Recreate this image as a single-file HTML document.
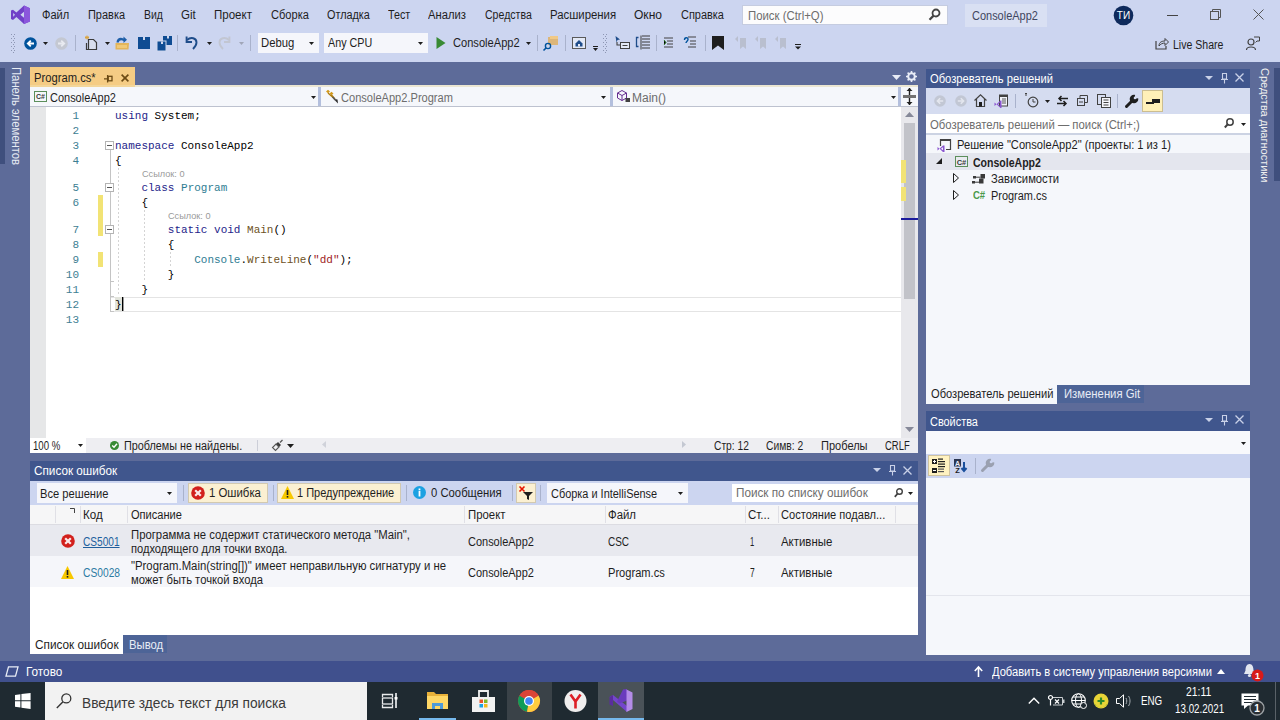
<!DOCTYPE html>
<html><head><meta charset="utf-8">
<style>
*{margin:0;padding:0;box-sizing:border-box}
html,body{width:1280px;height:720px;overflow:hidden;background:#5d6b99;font-family:"Liberation Sans",sans-serif;font-size:11px;color:#1e1e1e;position:relative}
.a{position:absolute}
.t{position:absolute;white-space:pre}
svg{position:absolute;overflow:visible}
</style></head><body>
<div class="a" style="left:0px;top:0px;width:1280px;height:62px;background:#ccd5f0;"></div>
<svg style="left:0px;top:0px;" width="40" height="30" viewBox="0 0 40 30"><path d="M24 5.6 L30 8.2 V21.4 L24 24 L16.4 17 L13 19.9 L11 19 V10.6 L13 9.7 L16.4 12.6 Z M13.2 12.9 V16.7 L15 14.8 Z M24 11.8 L20.4 14.8 L24 17.8 Z" fill="#7040c8" fill-rule="evenodd"/><path d="M24 5.6 L30 8.2 V21.4 L24 24 Z" fill="#8b57dc"/></svg>
<div class="t" style="left:42px;top:9px;font-size:12px;line-height:12px;color:#1e1e1e;font-family:'Liberation Sans',sans-serif;transform:scaleX(0.9223);transform-origin:0 0;">Файл</div>
<div class="t" style="left:88px;top:9px;font-size:12px;line-height:12px;color:#1e1e1e;font-family:'Liberation Sans',sans-serif;transform:scaleX(0.9128);transform-origin:0 0;">Правка</div>
<div class="t" style="left:144px;top:9px;font-size:12px;line-height:12px;color:#1e1e1e;font-family:'Liberation Sans',sans-serif;transform:scaleX(0.8688);transform-origin:0 0;">Вид</div>
<div class="t" style="left:181px;top:9px;font-size:12px;line-height:12px;color:#1e1e1e;font-family:'Liberation Sans',sans-serif;transform:scaleX(0.9621);transform-origin:0 0;">Git</div>
<div class="t" style="left:214px;top:9px;font-size:12px;line-height:12px;color:#1e1e1e;font-family:'Liberation Sans',sans-serif;transform:scaleX(0.9603);transform-origin:0 0;">Проект</div>
<div class="t" style="left:271px;top:9px;font-size:12px;line-height:12px;color:#1e1e1e;font-family:'Liberation Sans',sans-serif;transform:scaleX(0.9232);transform-origin:0 0;">Сборка</div>
<div class="t" style="left:327px;top:9px;font-size:12px;line-height:12px;color:#1e1e1e;font-family:'Liberation Sans',sans-serif;transform:scaleX(0.9044);transform-origin:0 0;">Отладка</div>
<div class="t" style="left:388px;top:9px;font-size:12px;line-height:12px;color:#1e1e1e;font-family:'Liberation Sans',sans-serif;transform:scaleX(0.8981);transform-origin:0 0;">Тест</div>
<div class="t" style="left:428px;top:9px;font-size:12px;line-height:12px;color:#1e1e1e;font-family:'Liberation Sans',sans-serif;transform:scaleX(0.9363);transform-origin:0 0;">Анализ</div>
<div class="t" style="left:485px;top:9px;font-size:12px;line-height:12px;color:#1e1e1e;font-family:'Liberation Sans',sans-serif;transform:scaleX(0.8798);transform-origin:0 0;">Средства</div>
<div class="t" style="left:550px;top:9px;font-size:12px;line-height:12px;color:#1e1e1e;font-family:'Liberation Sans',sans-serif;transform:scaleX(0.9477);transform-origin:0 0;">Расширения</div>
<div class="t" style="left:634px;top:9px;font-size:12px;line-height:12px;color:#1e1e1e;font-family:'Liberation Sans',sans-serif;transform:scaleX(1.0041);transform-origin:0 0;">Окно</div>
<div class="t" style="left:681px;top:9px;font-size:12px;line-height:12px;color:#1e1e1e;font-family:'Liberation Sans',sans-serif;transform:scaleX(0.9115);transform-origin:0 0;">Справка</div>
<div class="a" style="left:742px;top:5px;width:206px;height:20px;background:#fcfcfd;border:1px solid #c5cce0"></div>
<div class="t" style="left:748px;top:10px;font-size:12px;line-height:12px;color:#6d6d6d;font-family:'Liberation Sans',sans-serif;transform:scaleX(0.9479);transform-origin:0 0;">Поиск (Ctrl+Q)</div>
<svg style="left:928px;top:8px;" width="13" height="13" viewBox="0 0 13 13"><circle cx="8" cy="5" r="3.5" fill="none" stroke="#444" stroke-width="1.8"/><path d="M5.6 7.6 L1.5 11.7" stroke="#444" stroke-width="2.2"/></svg>
<div class="a" style="left:965px;top:4px;width:82px;height:23px;background:#d9e0f3;"></div>
<div class="t" style="left:972px;top:10px;font-size:12px;line-height:12px;color:#3f4660;font-family:'Liberation Sans',sans-serif;transform:scaleX(0.9147);transform-origin:0 0;">ConsoleApp2</div>
<svg style="left:1113px;top:5px;" width="21" height="21" viewBox="0 0 21 21"><circle cx="10.5" cy="10.5" r="9.8" fill="#0e2a5c"/><text x="10.5" y="14.3" font-size="10" fill="#fff" text-anchor="middle" font-family="Liberation Sans">ТИ</text></svg>
<div class="a" style="left:1167px;top:15px;width:11px;height:1px;background:#444;"></div>
<svg style="left:1210px;top:9px;" width="11" height="11" viewBox="0 0 11 11"><rect x="0.5" y="2.5" width="8" height="8" fill="none" stroke="#555"/><path d="M2.5 2.5 V0.5 H10.5 V8.5 H8.5" fill="none" stroke="#555"/></svg>
<svg style="left:1253px;top:9px;" width="11" height="11" viewBox="0 0 11 11"><path d="M0.5 0.5 L10.5 10.5 M10.5 0.5 L0.5 10.5" stroke="#555" stroke-width="1"/></svg>
<div class="a" style="left:11px;top:34px;width:1px;height:1px;background:#8d96b3;"></div>
<div class="a" style="left:14px;top:34px;width:1px;height:1px;background:#8d96b3;"></div>
<div class="a" style="left:12.5px;top:36px;width:1px;height:1px;background:#8d96b3;"></div>
<div class="a" style="left:11px;top:38px;width:1px;height:1px;background:#8d96b3;"></div>
<div class="a" style="left:14px;top:38px;width:1px;height:1px;background:#8d96b3;"></div>
<div class="a" style="left:12.5px;top:40px;width:1px;height:1px;background:#8d96b3;"></div>
<div class="a" style="left:11px;top:42px;width:1px;height:1px;background:#8d96b3;"></div>
<div class="a" style="left:14px;top:42px;width:1px;height:1px;background:#8d96b3;"></div>
<div class="a" style="left:12.5px;top:44px;width:1px;height:1px;background:#8d96b3;"></div>
<div class="a" style="left:11px;top:46px;width:1px;height:1px;background:#8d96b3;"></div>
<div class="a" style="left:14px;top:46px;width:1px;height:1px;background:#8d96b3;"></div>
<div class="a" style="left:12.5px;top:48px;width:1px;height:1px;background:#8d96b3;"></div>
<div class="a" style="left:11px;top:50px;width:1px;height:1px;background:#8d96b3;"></div>
<div class="a" style="left:14px;top:50px;width:1px;height:1px;background:#8d96b3;"></div>
<div class="a" style="left:12.5px;top:52px;width:1px;height:1px;background:#8d96b3;"></div>
<svg style="left:24px;top:37px;" width="13" height="13" viewBox="0 0 13 13"><circle cx="6.5" cy="6.5" r="6.3" fill="#00539c"/><path d="M10 6.5 H4 M6.8 3.6 L3.8 6.5 L6.8 9.4" stroke="#fff" stroke-width="1.8" fill="none"/></svg>
<svg style="left:43px;top:42px;" width="5" height="3" viewBox="0 0 5 3"><path d="M0 0 H5 L2.5 3 Z" fill="#1e1e1e"/></svg>
<svg style="left:55px;top:37px;" width="13" height="13" viewBox="0 0 13 13"><circle cx="6.5" cy="6.5" r="6.3" fill="#c4c8d2"/><path d="M3 6.5 H9 M6.2 3.6 L9.2 6.5 L6.2 9.4" stroke="#e8eaf0" stroke-width="1.8" fill="none"/></svg>
<div class="a" style="left:75px;top:35px;width:1px;height:16px;background:#a9b2cc;"></div>
<svg style="left:84px;top:35px;" width="14" height="16" viewBox="0 0 14 16"><path d="M3 0.5 V4.5 M1 2.5 H5 M1.5 1 L4.5 4 M4.5 1 L1.5 4" stroke="#d9a441" stroke-width="1"/><path d="M4.5 4.5 H9.5 L12.5 7.5 V14.5 H4.5 Z" fill="#d8deee" stroke="#3a3a3a" stroke-width="1.2"/><path d="M2.5 8 V14.5 H4" fill="none" stroke="#3a3a3a" stroke-width="1.2"/></svg>
<svg style="left:105px;top:42px;" width="5" height="3" viewBox="0 0 5 3"><path d="M0 0 H5 L2.5 3 Z" fill="#1e1e1e"/></svg>
<svg style="left:115px;top:36px;" width="15" height="14" viewBox="0 0 15 14"><path d="M1.5 6.5 C1.5 2.5 5 0.5 8.5 2.5 V0.5 L12 3.8 L8.5 7 V5 C6.5 3.8 4.2 4.2 3.8 6.5 Z" fill="#1f5fa8"/><path d="M0.5 7 H14 L13.5 13.5 H0.5 Z" fill="#e3b55b"/><rect x="2" y="9" width="10" height="3" fill="#f0c977"/></svg>
<svg style="left:138px;top:37px;" width="12" height="12" viewBox="0 0 12 12"><rect x="0" y="0" width="12" height="12" fill="#0f4c93"/><rect x="5" y="0" width="2" height="3" fill="#cfd8ee"/></svg>
<svg style="left:157px;top:36px;" width="15" height="15" viewBox="0 0 15 15"><rect x="6" y="0" width="9" height="9" fill="#0f4c93"/><rect x="10" y="0" width="2" height="2.5" fill="#cfd8ee"/><rect x="0" y="5" width="9" height="10" fill="#0f4c93" stroke="#cfd8ee" stroke-width="1"/><rect x="4" y="5.5" width="2" height="2.5" fill="#cfd8ee"/></svg>
<div class="a" style="left:177px;top:35px;width:1px;height:16px;background:#a9b2cc;"></div>
<svg style="left:184px;top:35px;" width="14" height="15" viewBox="0 0 14 15"><path d="M3 5 C7 1.5 12.5 3 12.5 7.5 C12.5 10 11 12 9 14" fill="none" stroke="#1f4d8a" stroke-width="1.9"/><path d="M2.6 1.5 V7 H8" fill="none" stroke="#1f4d8a" stroke-width="1.9"/></svg>
<svg style="left:207px;top:42px;" width="5" height="3" viewBox="0 0 5 3"><path d="M0 0 H5 L2.5 3 Z" fill="#1e1e1e"/></svg>
<svg style="left:218px;top:35px;" width="14" height="15" viewBox="0 0 14 15"><path d="M11 5 C7 1.5 1.5 3 1.5 7.5 C1.5 10 3 12 5 14" fill="none" stroke="#c2c6d2" stroke-width="1.9"/><path d="M11.4 1.5 V7 H6" fill="none" stroke="#c2c6d2" stroke-width="1.9"/></svg>
<svg style="left:239px;top:42px;" width="5" height="3" viewBox="0 0 5 3"><path d="M0 0 H5 L2.5 3 Z" fill="#a0a6b8"/></svg>
<div class="a" style="left:250px;top:35px;width:1px;height:16px;background:#a9b2cc;"></div>
<div class="a" style="left:258px;top:33px;width:61px;height:20px;background:#f5f6fb;"></div>
<div class="t" style="left:261px;top:37px;font-size:12px;line-height:12px;color:#1e1e1e;font-family:'Liberation Sans',sans-serif;transform:scaleX(0.9425);transform-origin:0 0;">Debug</div>
<svg style="left:309px;top:42px;" width="5" height="3" viewBox="0 0 5 3"><path d="M0 0 H5 L2.5 3 Z" fill="#1e1e1e"/></svg>
<div class="a" style="left:324px;top:33px;width:104px;height:20px;background:#f5f6fb;"></div>
<div class="t" style="left:328px;top:37px;font-size:12px;line-height:12px;color:#1e1e1e;font-family:'Liberation Sans',sans-serif;transform:scaleX(0.8943);transform-origin:0 0;">Any CPU</div>
<svg style="left:418px;top:42px;" width="5" height="3" viewBox="0 0 5 3"><path d="M0 0 H5 L2.5 3 Z" fill="#1e1e1e"/></svg>
<svg style="left:436px;top:37px;" width="10" height="12" viewBox="0 0 10 12"><path d="M0.5 0 L9.5 6 L0.5 12 Z" fill="#388a34"/></svg>
<div class="t" style="left:453px;top:37px;font-size:12px;line-height:12px;color:#1e1e1e;font-family:'Liberation Sans',sans-serif;transform:scaleX(0.9252);transform-origin:0 0;">ConsoleApp2</div>
<svg style="left:526px;top:42px;" width="5" height="3" viewBox="0 0 5 3"><path d="M0 0 H5 L2.5 3 Z" fill="#1e1e1e"/></svg>
<div class="a" style="left:537px;top:35px;width:1px;height:16px;background:#a9b2cc;"></div>
<svg style="left:543px;top:36px;" width="16" height="15" viewBox="0 0 16 15"><rect x="5" y="1" width="10" height="8" fill="#dcb67a"/><rect x="7" y="0" width="8" height="3" fill="#f0c987"/><circle cx="5" cy="10" r="2.6" fill="none" stroke="#00539c" stroke-width="1.4"/><path d="M3 12 L0.5 14.5" stroke="#00539c" stroke-width="1.6"/></svg>
<div class="a" style="left:565px;top:35px;width:1px;height:16px;background:#a9b2cc;"></div>
<svg style="left:572px;top:37px;" width="14" height="12" viewBox="0 0 14 12"><rect x="0.5" y="0.5" width="13" height="11" fill="#e3e9f6" stroke="#5a5a5a"/><path d="M3.5 6.5 L7 3 L10.5 6.5 V9.5 H3.5 Z" fill="#1f4d8a"/><rect x="6" y="7" width="2" height="2.5" fill="#e3e9f6"/></svg>
<svg style="left:593px;top:46px;" width="5" height="5" viewBox="0 0 5 5"><rect x="0" y="0" width="5" height="1" fill="#1e1e1e"/><path d="M0 2 H5 L2.5 5 Z" fill="#1e1e1e"/></svg>
<div class="a" style="left:603px;top:34px;width:1px;height:1px;background:#8d96b3;"></div>
<div class="a" style="left:606px;top:34px;width:1px;height:1px;background:#8d96b3;"></div>
<div class="a" style="left:604.5px;top:36px;width:1px;height:1px;background:#8d96b3;"></div>
<div class="a" style="left:603px;top:38px;width:1px;height:1px;background:#8d96b3;"></div>
<div class="a" style="left:606px;top:38px;width:1px;height:1px;background:#8d96b3;"></div>
<div class="a" style="left:604.5px;top:40px;width:1px;height:1px;background:#8d96b3;"></div>
<div class="a" style="left:603px;top:42px;width:1px;height:1px;background:#8d96b3;"></div>
<div class="a" style="left:606px;top:42px;width:1px;height:1px;background:#8d96b3;"></div>
<div class="a" style="left:604.5px;top:44px;width:1px;height:1px;background:#8d96b3;"></div>
<div class="a" style="left:603px;top:46px;width:1px;height:1px;background:#8d96b3;"></div>
<div class="a" style="left:606px;top:46px;width:1px;height:1px;background:#8d96b3;"></div>
<div class="a" style="left:604.5px;top:48px;width:1px;height:1px;background:#8d96b3;"></div>
<div class="a" style="left:603px;top:50px;width:1px;height:1px;background:#8d96b3;"></div>
<div class="a" style="left:606px;top:50px;width:1px;height:1px;background:#8d96b3;"></div>
<div class="a" style="left:604.5px;top:52px;width:1px;height:1px;background:#8d96b3;"></div>
<svg style="left:615px;top:36px;" width="15" height="14" viewBox="0 0 15 14"><path d="M0.5 0 L5 3.5 L2.5 4 L1.5 6.5 Z" fill="#1f4d8a"/><path d="M2 6 V9 H5" fill="none" stroke="#424242" stroke-width="1.1"/><rect x="5.5" y="6.5" width="9" height="6" fill="#e3e9f6" stroke="#424242"/><path d="M7.5 9.5 H12.5" stroke="#424242"/></svg>
<svg style="left:635px;top:35px;" width="16" height="15" viewBox="0 0 16 15"><path d="M3.5 2.5 H1.5 V11.5 H3.5" fill="none" stroke="#1f4d8a" stroke-width="1.3"/><path d="M7 1 H15 M7 4 H15 M7 7 H15 M7 10 H15 M7 13 H15" stroke="#3a3a3a" stroke-width="1.1"/><path d="M6 0.5 V14.5" stroke="#3a3a3a"/></svg>
<div class="a" style="left:656px;top:35px;width:1px;height:16px;background:#a9b2cc;"></div>
<svg style="left:664px;top:37px;" width="10" height="11" viewBox="0 0 10 11"><path d="M0 1 H9 M3 4 H9 M3 7 H9 M0 10 H9" stroke="#424242" stroke-width="1.2"/><path d="M0 3 L2 5.5 L0 8" stroke="#388a34" stroke-width="1"/></svg>
<svg style="left:684px;top:36px;" width="13" height="13" viewBox="0 0 13 13"><path d="M4 1 H12 M6 5 H12 M6 8 H12 M4 11 H12" stroke="#424242" stroke-width="1.2"/><path d="M0.5 4 C0.5 1 4 1 4 3.5 C4 5 2 5.5 2 7" fill="none" stroke="#00539c" stroke-width="1.4"/></svg>
<div class="a" style="left:705px;top:35px;width:1px;height:16px;background:#a9b2cc;"></div>
<svg style="left:712px;top:36px;" width="12" height="14" viewBox="0 0 12 14"><path d="M0 0 H12 V14 L6 9.5 L0 14 Z" fill="#1e1e1e"/></svg>
<svg style="left:735px;top:36px;" width="11" height="13" viewBox="0 0 11 13"><path d="M5 2 H11 V13 L8 10.5 L5 13 Z" fill="#b9bfcf"/><path d="M0 3 L3 0 L3 6 Z" fill="#b9bfcf"/></svg>
<svg style="left:755px;top:36px;" width="11" height="13" viewBox="0 0 11 13"><path d="M5 2 H11 V13 L8 10.5 L5 13 Z" fill="#b9bfcf"/><path d="M0 3 L3 0 L3 6 Z" fill="#b9bfcf"/></svg>
<svg style="left:775px;top:36px;" width="11" height="13" viewBox="0 0 11 13"><path d="M5 2 H11 V13 L8 10.5 L5 13 Z" fill="#b9bfcf"/><path d="M0 3 L3 0 L3 6 Z" fill="#b9bfcf"/></svg>
<svg style="left:795px;top:44px;" width="6" height="6" viewBox="0 0 6 6"><rect x="0" y="0" width="6" height="1" fill="#1e1e1e"/><path d="M0 2.5 H6 L3 5.5 Z" fill="#1e1e1e"/></svg>
<svg style="left:1155px;top:37px;" width="14" height="13" viewBox="0 0 14 13"><path d="M1 4 V12 H11 V9" fill="none" stroke="#424242" stroke-width="1.2"/><path d="M4 9 C4 5 7 4 10 4 V1.5 L13.5 5 L10 8.5 V6 C7.5 6 5.5 7 4 9 Z" fill="none" stroke="#424242"/></svg>
<div class="t" style="left:1173px;top:39px;font-size:12px;line-height:12px;color:#1e1e1e;font-family:'Liberation Sans',sans-serif;transform:scaleX(0.8780);transform-origin:0 0;">Live Share</div>
<svg style="left:1246px;top:36px;" width="14" height="15" viewBox="0 0 14 15"><circle cx="5" cy="6" r="3" fill="none" stroke="#424242" stroke-width="1.2"/><path d="M0.5 14 C0.5 10 9.5 10 9.5 14" fill="none" stroke="#424242" stroke-width="1.2"/><path d="M8 1 H13.5 V5 H11 L9.5 6.5" fill="none" stroke="#424242"/></svg>
<div class="a" style="left:0px;top:68px;width:5px;height:96px;background:#3f4f7d;"></div>
<div class="t" style="left:5px;top:67px;width:20px;height:100px;"><div style="position:absolute;left:0;top:0;transform-origin:0 0;transform:translate(16.5px,0) rotate(90deg) scaleX(0.94);font-size:12px;line-height:12px;color:#e8ecf4;white-space:pre">Панель элементов</div></div>
<div class="a" style="left:30px;top:67px;width:105px;height:19px;background:#f5cc84;"></div>
<div class="t" style="left:34px;top:72px;font-size:12px;line-height:12px;color:#1e1e1e;font-family:'Liberation Sans',sans-serif;transform:scaleX(0.9349);transform-origin:0 0;">Program.cs*</div>
<svg style="left:104px;top:74px;" width="9" height="9" viewBox="0 0 9 9"><path d="M0 4.8 H3.2 M3.6 1 V8.5" stroke="#6b4a14" stroke-width="1.3"/><rect x="4.2" y="2.3" width="3.8" height="4.5" fill="none" stroke="#6b4a14" stroke-width="1.3"/></svg>
<svg style="left:121px;top:74px;" width="8" height="8" viewBox="0 0 8 8"><path d="M0.6 0.6 L7.4 7.4 M7.4 0.6 L0.6 7.4" stroke="#6b4a14" stroke-width="1.6"/></svg>
<svg style="left:892px;top:75px;" width="9" height="5" viewBox="0 0 9 5"><path d="M0 0 H9 L4.5 5 Z" fill="#e8ecf6"/></svg>
<svg style="left:906px;top:71px;" width="11" height="11" viewBox="0 0 11 11"><circle cx="5.5" cy="5.5" r="3.3" fill="none" stroke="#e8ecf6" stroke-width="2"/><path d="M5.5 0 V2 M5.5 9 V11 M0 5.5 H2 M9 5.5 H11 M1.6 1.6 L3 3 M8 8 L9.4 9.4 M1.6 9.4 L3 8 M8 3 L9.4 1.6" stroke="#e8ecf6" stroke-width="1.6"/></svg>
<div class="a" style="left:30px;top:85px;width:888px;height:2px;background:#ebe6d2;"></div>
<div class="a" style="left:30px;top:85px;width:105px;height:2px;background:#f3d69a;"></div>
<div class="a" style="left:30px;top:87px;width:888px;height:20px;background:#f5f7fb;"></div>
<div class="a" style="left:30px;top:106px;width:888px;height:1.5px;background:#bdc2cf;"></div>
<div class="a" style="left:318px;top:87px;width:3px;height:19px;background:#b3bfdd;"></div>
<div class="a" style="left:610px;top:87px;width:3px;height:19px;background:#b3bfdd;"></div>
<div class="a" style="left:898px;top:87px;width:3px;height:19px;background:#b3bfdd;"></div>
<svg style="left:34px;top:91px;" width="13" height="11" viewBox="0 0 13 11"><rect x="0.5" y="0.5" width="12" height="10" fill="#f5f7fb" stroke="#5c8f5c"/><text x="6.5" y="8.3" font-size="7" font-weight="bold" text-anchor="middle" fill="#3a3a3a" font-family="Liberation Sans">C#</text></svg>
<div class="t" style="left:50px;top:92px;font-size:12px;line-height:12px;color:#1e1e1e;font-family:'Liberation Sans',sans-serif;transform:scaleX(0.9147);transform-origin:0 0;">ConsoleApp2</div>
<svg style="left:311px;top:96px;" width="5" height="3" viewBox="0 0 5 3"><path d="M0 0 H5 L2.5 3 Z" fill="#1e1e1e"/></svg>
<svg style="left:324px;top:89px;" width="16" height="16" viewBox="0 0 16 16"><path d="M2 2.5 L4 0.8 L6 2.5 L4 4.2 Z M5.5 4.5 L7.5 2.8 L9.5 4.5 L7.5 6.2 Z" fill="#d39a1e"/><path d="M4 4 L9 8.5 M7.5 6 L11 10" stroke="#b07d10" stroke-width="1.3"/><path d="M9.5 10 L13.5 10.5 L14 14.5 Z" fill="#2a2a2a"/><path d="M8.5 8 L12 11.5" stroke="#555" stroke-width="1.5"/></svg>
<div class="t" style="left:341px;top:92px;font-size:12px;line-height:12px;color:#6d6d6d;font-family:'Liberation Sans',sans-serif;transform:scaleX(0.9219);transform-origin:0 0;">ConsoleApp2.Program</div>
<svg style="left:601px;top:96px;" width="5" height="3" viewBox="0 0 5 3"><path d="M0 0 H5 L2.5 3 Z" fill="#1e1e1e"/></svg>
<svg style="left:617px;top:90px;" width="14" height="13" viewBox="0 0 14 13"><path d="M5 0.5 L9.5 3 V8 L5 10.5 L0.5 8 V3 Z" fill="#f5f7fb" stroke="#652d90"/><path d="M0.5 3 L5 5.5 L9.5 3 M5 5.5 V10.5" fill="none" stroke="#652d90"/><rect x="8.5" y="8" width="4.5" height="4" fill="#424242"/></svg>
<div class="t" style="left:632px;top:92px;font-size:12px;line-height:12px;color:#6d6d6d;font-family:'Liberation Sans',sans-serif;">Main()</div>
<svg style="left:891px;top:96px;" width="5" height="3" viewBox="0 0 5 3"><path d="M0 0 H5 L2.5 3 Z" fill="#1e1e1e"/></svg>
<svg style="left:903px;top:88px;" width="13" height="17" viewBox="0 0 13 17"><path d="M6.5 0 V17" stroke="#1e1e1e" stroke-width="1.4"/><path d="M3.5 3 L6.5 0 L9.5 3 Z M3.5 14 L6.5 17 L9.5 14 Z" fill="#1e1e1e"/><rect x="0" y="7" width="13" height="3" fill="#717171"/></svg>
<div class="a" style="left:30px;top:107px;width:871px;height:331px;background:#ffffff;"></div>
<div class="a" style="left:30px;top:107px;width:16px;height:331px;background:#e6e7e8;"></div>
<div class="a" style="left:901px;top:107px;width:17px;height:331px;background:#e8e8ec;"></div>
<svg style="left:905px;top:112px;" width="9" height="5" viewBox="0 0 9 5"><path d="M0 5 L4.5 0 L9 5 Z" fill="#868999"/></svg>
<svg style="left:905px;top:427px;" width="9" height="5" viewBox="0 0 9 5"><path d="M0 0 L4.5 5 L9 0 Z" fill="#868999"/></svg>
<div class="a" style="left:904px;top:123px;width:11px;height:176px;background:#c2c3c9;"></div>
<div class="a" style="left:901px;top:160px;width:5px;height:23px;background:#f2e375;"></div>
<div class="a" style="left:901px;top:187px;width:5px;height:14px;background:#f2e375;"></div>
<div class="a" style="left:901px;top:218px;width:17px;height:2px;background:#1c1c9c;"></div>
<div class="a" style="left:110px;top:297px;width:791px;height:15px;background:transparent;border:1px solid #e4e4e4;border-right:none"></div>
<div class="a" style="left:115px;top:297px;width:7px;height:14px;background:#e2e4dc;"></div>
<div class="t" style="left:72.4px;top:111px;font-size:11px;line-height:11px;color:#3d7e92;font-family:'Liberation Mono',monospace;">1</div>
<div class="t" style="left:115px;top:111px;font-size:11px;line-height:11px;color:#000000;font-family:'Liberation Mono',monospace;"><span style="color:#24248a">using</span> System;</div>
<div class="t" style="left:72.4px;top:126px;font-size:11px;line-height:11px;color:#3d7e92;font-family:'Liberation Mono',monospace;">2</div>
<div class="t" style="left:72.4px;top:141px;font-size:11px;line-height:11px;color:#3d7e92;font-family:'Liberation Mono',monospace;">3</div>
<div class="t" style="left:115px;top:141px;font-size:11px;line-height:11px;color:#000000;font-family:'Liberation Mono',monospace;"><span style="color:#24248a">namespace</span> ConsoleApp2</div>
<div class="t" style="left:72.4px;top:156px;font-size:11px;line-height:11px;color:#3d7e92;font-family:'Liberation Mono',monospace;">4</div>
<div class="t" style="left:115px;top:156px;font-size:11px;line-height:11px;color:#000000;font-family:'Liberation Mono',monospace;">{</div>
<div class="t" style="left:72.4px;top:183px;font-size:11px;line-height:11px;color:#3d7e92;font-family:'Liberation Mono',monospace;">5</div>
<div class="t" style="left:115px;top:183px;font-size:11px;line-height:11px;color:#000000;font-family:'Liberation Mono',monospace;">    <span style="color:#24248a">class</span> <span style="color:#2f7d93">Program</span></div>
<div class="t" style="left:72.4px;top:198px;font-size:11px;line-height:11px;color:#3d7e92;font-family:'Liberation Mono',monospace;">6</div>
<div class="t" style="left:115px;top:198px;font-size:11px;line-height:11px;color:#000000;font-family:'Liberation Mono',monospace;">    {</div>
<div class="t" style="left:72.4px;top:225px;font-size:11px;line-height:11px;color:#3d7e92;font-family:'Liberation Mono',monospace;">7</div>
<div class="t" style="left:115px;top:225px;font-size:11px;line-height:11px;color:#000000;font-family:'Liberation Mono',monospace;">        <span style="color:#24248a">static</span> <span style="color:#24248a">void</span> <span style="color:#6e5224">Main</span>()</div>
<div class="t" style="left:72.4px;top:240px;font-size:11px;line-height:11px;color:#3d7e92;font-family:'Liberation Mono',monospace;">8</div>
<div class="t" style="left:115px;top:240px;font-size:11px;line-height:11px;color:#000000;font-family:'Liberation Mono',monospace;">        {</div>
<div class="t" style="left:72.4px;top:255px;font-size:11px;line-height:11px;color:#3d7e92;font-family:'Liberation Mono',monospace;">9</div>
<div class="t" style="left:115px;top:255px;font-size:11px;line-height:11px;color:#000000;font-family:'Liberation Mono',monospace;">            <span style="color:#2f7d93">Console</span>.<span style="color:#6e5224">WriteLine</span>(<span style="color:#a01d1d">"dd"</span>);</div>
<div class="t" style="left:65.8px;top:270px;font-size:11px;line-height:11px;color:#3d7e92;font-family:'Liberation Mono',monospace;">10</div>
<div class="t" style="left:115px;top:270px;font-size:11px;line-height:11px;color:#000000;font-family:'Liberation Mono',monospace;">        }</div>
<div class="t" style="left:65.8px;top:285px;font-size:11px;line-height:11px;color:#3d7e92;font-family:'Liberation Mono',monospace;">11</div>
<div class="t" style="left:115px;top:285px;font-size:11px;line-height:11px;color:#000000;font-family:'Liberation Mono',monospace;">    }</div>
<div class="t" style="left:65.8px;top:300px;font-size:11px;line-height:11px;color:#3d7e92;font-family:'Liberation Mono',monospace;">12</div>
<div class="t" style="left:115px;top:300px;font-size:11px;line-height:11px;color:#000000;font-family:'Liberation Mono',monospace;">}</div>
<div class="t" style="left:65.8px;top:315px;font-size:11px;line-height:11px;color:#3d7e92;font-family:'Liberation Mono',monospace;">13</div>
<div class="a" style="left:122px;top:297px;width:1px;height:14px;background:#000;"></div>
<div class="a" style="left:123px;top:297px;width:1px;height:14px;background:#9a9a9a;"></div>
<div class="t" style="left:142px;top:170px;font-size:9px;line-height:9px;color:#9a9a9a;font-family:'Liberation Sans',sans-serif;transform:scaleX(1.0176);transform-origin:0 0;">Ссылок: 0</div>
<div class="t" style="left:168px;top:212px;font-size:9px;line-height:9px;color:#9a9a9a;font-family:'Liberation Sans',sans-serif;transform:scaleX(1.0176);transform-origin:0 0;">Ссылок: 0</div>
<div class="a" style="left:98px;top:195px;width:5px;height:41px;background:#f2e375;"></div>
<div class="a" style="left:98px;top:252px;width:5px;height:15px;background:#f2e375;"></div>
<div class="a" style="left:110px;top:150px;width:1px;height:162px;background:#c4c4c4;"></div>
<div class="a" style="left:110px;top:281px;width:4px;height:1px;background:#c4c4c4;"></div>
<div class="a" style="left:110px;top:296px;width:4px;height:1px;background:#c4c4c4;"></div>
<div class="a" style="left:110px;top:311px;width:4px;height:1px;background:#c4c4c4;"></div>
<svg style="left:105px;top:141px;" width="9" height="9" viewBox="0 0 9 9"><rect x="0.5" y="0.5" width="8" height="8" fill="#fff" stroke="#b4b4b4"/><path d="M2 4.5 H7" stroke="#555"/></svg>
<svg style="left:105px;top:183px;" width="9" height="9" viewBox="0 0 9 9"><rect x="0.5" y="0.5" width="8" height="8" fill="#fff" stroke="#b4b4b4"/><path d="M2 4.5 H7" stroke="#555"/></svg>
<svg style="left:105px;top:225px;" width="9" height="9" viewBox="0 0 9 9"><rect x="0.5" y="0.5" width="8" height="8" fill="#fff" stroke="#b4b4b4"/><path d="M2 4.5 H7" stroke="#555"/></svg>
<div class="a" style="left:118px;top:168px;width:1px;height:2px;background:#d4d4d4;"></div>
<div class="a" style="left:118px;top:172px;width:1px;height:2px;background:#d4d4d4;"></div>
<div class="a" style="left:118px;top:176px;width:1px;height:2px;background:#d4d4d4;"></div>
<div class="a" style="left:118px;top:180px;width:1px;height:2px;background:#d4d4d4;"></div>
<div class="a" style="left:118px;top:184px;width:1px;height:2px;background:#d4d4d4;"></div>
<div class="a" style="left:118px;top:188px;width:1px;height:2px;background:#d4d4d4;"></div>
<div class="a" style="left:118px;top:192px;width:1px;height:2px;background:#d4d4d4;"></div>
<div class="a" style="left:118px;top:196px;width:1px;height:2px;background:#d4d4d4;"></div>
<div class="a" style="left:118px;top:200px;width:1px;height:2px;background:#d4d4d4;"></div>
<div class="a" style="left:118px;top:204px;width:1px;height:2px;background:#d4d4d4;"></div>
<div class="a" style="left:118px;top:208px;width:1px;height:2px;background:#d4d4d4;"></div>
<div class="a" style="left:118px;top:212px;width:1px;height:2px;background:#d4d4d4;"></div>
<div class="a" style="left:118px;top:216px;width:1px;height:2px;background:#d4d4d4;"></div>
<div class="a" style="left:118px;top:220px;width:1px;height:2px;background:#d4d4d4;"></div>
<div class="a" style="left:118px;top:224px;width:1px;height:2px;background:#d4d4d4;"></div>
<div class="a" style="left:118px;top:228px;width:1px;height:2px;background:#d4d4d4;"></div>
<div class="a" style="left:118px;top:232px;width:1px;height:2px;background:#d4d4d4;"></div>
<div class="a" style="left:118px;top:236px;width:1px;height:2px;background:#d4d4d4;"></div>
<div class="a" style="left:118px;top:240px;width:1px;height:2px;background:#d4d4d4;"></div>
<div class="a" style="left:118px;top:244px;width:1px;height:2px;background:#d4d4d4;"></div>
<div class="a" style="left:118px;top:248px;width:1px;height:2px;background:#d4d4d4;"></div>
<div class="a" style="left:118px;top:252px;width:1px;height:2px;background:#d4d4d4;"></div>
<div class="a" style="left:118px;top:256px;width:1px;height:2px;background:#d4d4d4;"></div>
<div class="a" style="left:118px;top:260px;width:1px;height:2px;background:#d4d4d4;"></div>
<div class="a" style="left:118px;top:264px;width:1px;height:2px;background:#d4d4d4;"></div>
<div class="a" style="left:118px;top:268px;width:1px;height:2px;background:#d4d4d4;"></div>
<div class="a" style="left:118px;top:272px;width:1px;height:2px;background:#d4d4d4;"></div>
<div class="a" style="left:118px;top:276px;width:1px;height:2px;background:#d4d4d4;"></div>
<div class="a" style="left:118px;top:280px;width:1px;height:2px;background:#d4d4d4;"></div>
<div class="a" style="left:118px;top:284px;width:1px;height:2px;background:#d4d4d4;"></div>
<div class="a" style="left:118px;top:288px;width:1px;height:2px;background:#d4d4d4;"></div>
<div class="a" style="left:118px;top:292px;width:1px;height:2px;background:#d4d4d4;"></div>
<div class="a" style="left:144px;top:210px;width:1px;height:2px;background:#d4d4d4;"></div>
<div class="a" style="left:144px;top:214px;width:1px;height:2px;background:#d4d4d4;"></div>
<div class="a" style="left:144px;top:218px;width:1px;height:2px;background:#d4d4d4;"></div>
<div class="a" style="left:144px;top:222px;width:1px;height:2px;background:#d4d4d4;"></div>
<div class="a" style="left:144px;top:226px;width:1px;height:2px;background:#d4d4d4;"></div>
<div class="a" style="left:144px;top:230px;width:1px;height:2px;background:#d4d4d4;"></div>
<div class="a" style="left:144px;top:234px;width:1px;height:2px;background:#d4d4d4;"></div>
<div class="a" style="left:144px;top:238px;width:1px;height:2px;background:#d4d4d4;"></div>
<div class="a" style="left:144px;top:242px;width:1px;height:2px;background:#d4d4d4;"></div>
<div class="a" style="left:144px;top:246px;width:1px;height:2px;background:#d4d4d4;"></div>
<div class="a" style="left:144px;top:250px;width:1px;height:2px;background:#d4d4d4;"></div>
<div class="a" style="left:144px;top:254px;width:1px;height:2px;background:#d4d4d4;"></div>
<div class="a" style="left:144px;top:258px;width:1px;height:2px;background:#d4d4d4;"></div>
<div class="a" style="left:144px;top:262px;width:1px;height:2px;background:#d4d4d4;"></div>
<div class="a" style="left:144px;top:266px;width:1px;height:2px;background:#d4d4d4;"></div>
<div class="a" style="left:144px;top:270px;width:1px;height:2px;background:#d4d4d4;"></div>
<div class="a" style="left:144px;top:274px;width:1px;height:2px;background:#d4d4d4;"></div>
<div class="a" style="left:144px;top:278px;width:1px;height:2px;background:#d4d4d4;"></div>
<div class="a" style="left:170px;top:252px;width:1px;height:2px;background:#d4d4d4;"></div>
<div class="a" style="left:170px;top:256px;width:1px;height:2px;background:#d4d4d4;"></div>
<div class="a" style="left:170px;top:260px;width:1px;height:2px;background:#d4d4d4;"></div>
<div class="a" style="left:170px;top:264px;width:1px;height:2px;background:#d4d4d4;"></div>
<div class="a" style="left:30px;top:438px;width:888px;height:15px;background:#eeeef2;"></div>
<div class="a" style="left:30px;top:438px;width:56px;height:15px;background:#ffffff;"></div>
<div class="t" style="left:33px;top:440px;font-size:12px;line-height:12px;color:#1e1e1e;font-family:'Liberation Sans',sans-serif;transform:scaleX(0.8023);transform-origin:0 0;">100 %</div>
<svg style="left:78px;top:444px;" width="5" height="3" viewBox="0 0 5 3"><path d="M0 0 H5 L2.5 3 Z" fill="#1e1e1e"/></svg>
<svg style="left:110px;top:441px;" width="9" height="9" viewBox="0 0 9 9"><circle cx="4.5" cy="4.5" r="4.5" fill="#388a34"/><path d="M2.2 4.6 L4 6.3 L7 2.8" fill="none" stroke="#fff" stroke-width="1.4"/></svg>
<div class="t" style="left:124px;top:440px;font-size:12px;line-height:12px;color:#1e1e1e;font-family:'Liberation Sans',sans-serif;transform:scaleX(0.9013);transform-origin:0 0;">Проблемы не найдены.</div>
<div class="a" style="left:257px;top:440px;width:1px;height:11px;background:#ccced8;"></div>
<svg style="left:271px;top:439px;" width="13" height="13" viewBox="0 0 13 13"><path d="M11.5 1 L9 3.5" stroke="#555" stroke-width="1.3"/><path d="M7 3 L10 6 L8 8 L5 5 Z" fill="#3c3c3c"/><path d="M5 5 L8 8 L4.5 11.5 L1.5 8.5 Z" fill="#f0f0f3" stroke="#555" stroke-width="1.1"/></svg>
<svg style="left:287px;top:444px;" width="7" height="4" viewBox="0 0 7 4"><path d="M0 0 H7 L3.5 4 Z" fill="#1e1e1e"/></svg>
<svg style="left:322px;top:441px;" width="4" height="7" viewBox="0 0 4 7"><path d="M4 0 V7 L0 3.5 Z" fill="#d0d2da"/></svg>
<svg style="left:682px;top:441px;" width="4" height="7" viewBox="0 0 4 7"><path d="M0 0 V7 L4 3.5 Z" fill="#c4c8d2"/></svg>
<div class="t" style="left:714px;top:440px;font-size:12px;line-height:12px;color:#1e1e1e;font-family:'Liberation Sans',sans-serif;transform:scaleX(0.8530);transform-origin:0 0;">Стр: 12</div>
<div class="t" style="left:766px;top:440px;font-size:12px;line-height:12px;color:#1e1e1e;font-family:'Liberation Sans',sans-serif;transform:scaleX(0.8573);transform-origin:0 0;">Симв: 2</div>
<div class="t" style="left:821px;top:440px;font-size:12px;line-height:12px;color:#1e1e1e;font-family:'Liberation Sans',sans-serif;transform:scaleX(0.9189);transform-origin:0 0;">Пробелы</div>
<div class="t" style="left:885px;top:440px;font-size:12px;line-height:12px;color:#1e1e1e;font-family:'Liberation Sans',sans-serif;transform:scaleX(0.7876);transform-origin:0 0;">CRLF</div>
<div class="a" style="left:926px;top:69px;width:324px;height:19px;background:#40568d;"></div>
<div class="t" style="left:930px;top:73px;font-size:12px;line-height:12px;color:#ffffff;font-family:'Liberation Sans',sans-serif;transform:scaleX(0.9302);transform-origin:0 0;">Обозреватель решений</div>
<svg style="left:1205px;top:76px;" width="8" height="4" viewBox="0 0 8 4"><path d="M0 0 H8 L4 4 Z" fill="#c9d1e8"/></svg>
<svg style="left:1221px;top:73px;" width="7" height="11" viewBox="0 0 7 11"><path d="M1.5 0.5 H5.5 V6 H1.5 Z M0 6.5 H7 M3.5 6.5 V10.5" fill="none" stroke="#c9d1e8" stroke-width="1.1"/></svg>
<svg style="left:1235px;top:73px;" width="9" height="9" viewBox="0 0 9 9"><path d="M0.5 0.5 L8.5 8.5 M8.5 0.5 L0.5 8.5" stroke="#c9d1e8" stroke-width="1.3"/></svg>
<div class="a" style="left:926px;top:88px;width:324px;height:26px;background:#d5dcf0;"></div>
<svg style="left:934px;top:95px;" width="12" height="12" viewBox="0 0 12 12"><circle cx="6" cy="6" r="5.8" fill="#c2c7d4"/><path d="M9.2 6 H3.6 M6.2 3.2 L3.4 6 L6.2 8.8" stroke="#e3e6ee" stroke-width="1.6" fill="none"/></svg>
<svg style="left:955px;top:95px;" width="12" height="12" viewBox="0 0 12 12"><circle cx="6" cy="6" r="5.8" fill="#c2c7d4"/><path d="M2.8 6 H8.4 M5.8 3.2 L8.6 6 L5.8 8.8" stroke="#e3e6ee" stroke-width="1.6" fill="none"/></svg>
<svg style="left:974px;top:94px;" width="13" height="13" viewBox="0 0 13 13"><path d="M0.5 6.5 L6.5 0.8 L12.5 6.5 M2.5 5 V12.5 H10.5 V5" fill="none" stroke="#424242" stroke-width="1.2"/><rect x="5" y="8" width="3" height="4.5" fill="#1e1e1e"/></svg>
<svg style="left:994px;top:94px;" width="14" height="14" viewBox="0 0 14 14"><rect x="5.5" y="1" width="8" height="11" fill="#f0f2f8" stroke="#424242"/><rect x="5.5" y="1" width="8" height="2" fill="#424242"/><path d="M8 5 H12 M8 7 H12 M8 9 H12" stroke="#555"/><path d="M0.5 8.5 L2.5 10.3 L6.5 6.5 H7.5 V14 H6.5 L2.5 10.3 L0.5 12.1 Z M4 10.3 L6 12 V8.6 Z" fill="#8a55d0" fill-rule="evenodd"/></svg>
<div class="a" style="left:1015px;top:94px;width:1px;height:14px;background:#a9b2cc;"></div>
<svg style="left:1025px;top:93px;" width="14" height="15" viewBox="0 0 14 15"><path d="M1 0 V3 M0 0.5 H2" stroke="#424242"/><circle cx="8" cy="9" r="4.8" fill="none" stroke="#424242" stroke-width="1.2"/><path d="M8 6 V9 H10.5" fill="none" stroke="#424242"/></svg>
<svg style="left:1045px;top:100px;" width="5" height="3" viewBox="0 0 5 3"><path d="M0 0 H5 L2.5 3 Z" fill="#1e1e1e"/></svg>
<svg style="left:1057px;top:95px;" width="11" height="12" viewBox="0 0 11 12"><path d="M11 3.5 H2 M4.5 1 L2 3.5 L4.5 6 M0 8.5 H9 M6.5 6 L9 8.5 L6.5 11" fill="none" stroke="#1e1e1e" stroke-width="1.5"/></svg>
<svg style="left:1077px;top:95px;" width="11" height="11" viewBox="0 0 11 11"><rect x="0.5" y="3.5" width="7" height="7" fill="#d5dcf0" stroke="#424242"/><path d="M3 3.5 V0.5 H10.5 V7.5 H7.5" fill="none" stroke="#424242"/><path d="M2 7 H6" stroke="#424242"/></svg>
<svg style="left:1097px;top:94px;" width="14" height="14" viewBox="0 0 14 14"><rect x="0.5" y="0.5" width="8" height="10" fill="#d5dcf0" stroke="#424242"/><rect x="4.5" y="3.5" width="9" height="10" fill="#f5f6fb" stroke="#424242"/><path d="M6.5 6 H11.5 M6.5 8.5 H11.5 M6.5 11 H11.5" stroke="#424242"/></svg>
<div class="a" style="left:1117px;top:94px;width:1px;height:14px;background:#a9b2cc;"></div>
<svg style="left:1125px;top:94px;" width="14" height="14" viewBox="0 0 14 14"><path d="M1.5 12.5 L7 7" stroke="#1e1e1e" stroke-width="3" stroke-linecap="round"/><circle cx="9" cy="5" r="4.3" fill="#1e1e1e"/><path d="M9.2 4.8 L10.5 -0.5 L15 4 Z" fill="#d5dcf0"/><circle cx="10" cy="4" r="1.3" fill="#d5dcf0"/></svg>
<div class="a" style="left:1142px;top:90px;width:21px;height:22px;background:#fff0b8;border:1px solid #cbbd91"></div>
<div class="a" style="left:1152px;top:99px;width:8px;height:4px;background:#1e1e1e;"></div>
<div class="a" style="left:1146px;top:102px;width:8px;height:1.5px;background:#1e1e1e;"></div>
<div class="a" style="left:926px;top:114px;width:324px;height:20px;background:#ffffff;"></div>
<div class="a" style="left:926px;top:133px;width:324px;height:2px;background:#ccd3e3;"></div>
<div class="t" style="left:930px;top:119px;font-size:12px;line-height:12px;color:#6d6d6d;font-family:'Liberation Sans',sans-serif;transform:scaleX(0.9440);transform-origin:0 0;">Обозреватель решений — поиск (Ctrl+;)</div>
<svg style="left:1224px;top:118px;" width="10" height="11" viewBox="0 0 10 11"><circle cx="6" cy="4" r="3.2" fill="none" stroke="#424242" stroke-width="1.5"/><path d="M4 6 L0.8 9.5" stroke="#424242" stroke-width="2"/></svg>
<svg style="left:1241px;top:123px;" width="5" height="3" viewBox="0 0 5 3"><path d="M0 0 H5 L2.5 3 Z" fill="#1e1e1e"/></svg>
<div class="a" style="left:926px;top:135px;width:324px;height:250px;background:#f5f7fb;"></div>
<div class="a" style="left:926px;top:153px;width:324px;height:17px;background:#e4e6ee;"></div>
<svg style="left:937px;top:139px;" width="15" height="13" viewBox="0 0 15 13"><path d="M3.5 7 V0.5 H13.5 V10.5 H9" fill="none" stroke="#424242" stroke-width="1.2"/><rect x="3" y="0" width="11" height="2" fill="#424242"/><path d="M0.5 8 L2.5 9.8 L6 6.5 H7.5 V13 H6 L2.5 9.8 L0.5 11.6 Z M4 9.8 L6 11.3 V8.3 Z" fill="#8a55d0" fill-rule="evenodd"/></svg>
<div class="t" style="left:957px;top:139px;font-size:12px;line-height:12px;color:#1e1e1e;font-family:'Liberation Sans',sans-serif;transform:scaleX(0.9277);transform-origin:0 0;">Решение "ConsoleApp2" (проекты: 1 из 1)</div>
<svg style="left:936px;top:158px;" width="6" height="6" viewBox="0 0 6 6"><path d="M6 0 V6 H0 Z" fill="#1e1e1e"/></svg>
<svg style="left:955px;top:156px;" width="13" height="11" viewBox="0 0 13 11"><rect x="0.5" y="0.5" width="12" height="10" fill="#e9ebf0" stroke="#5c8f5c"/><text x="6.5" y="8.5" font-size="7.5" font-weight="bold" text-anchor="middle" fill="#3a3a3a" font-family="Liberation Sans">C#</text></svg>
<div class="t" style="left:973px;top:157px;font-size:12px;line-height:12px;color:#1e1e1e;font-family:'Liberation Sans',sans-serif;transform:scaleX(0.8776);transform-origin:0 0;font-weight:bold">ConsoleApp2</div>
<svg style="left:953px;top:173px;" width="6" height="10" viewBox="0 0 6 10"><path d="M0.5 0.5 L5.5 5 L0.5 9.5 Z" fill="none" stroke="#1e1e1e"/></svg>
<svg style="left:971px;top:173px;" width="15" height="11" viewBox="0 0 15 11"><rect x="9.5" y="1" width="4.5" height="4.5" fill="#3a3a3a"/><rect x="2" y="3" width="3" height="2.5" fill="#3a3a3a"/><path d="M5 4.2 H9.5" stroke="#3a3a3a"/><rect x="8" y="5.5" width="4.5" height="5" fill="#3a3a3a"/><rect x="1" y="8" width="3" height="2.5" fill="#3a3a3a"/><path d="M4 9.2 H8" stroke="#3a3a3a"/></svg>
<div class="t" style="left:991px;top:173px;font-size:12px;line-height:12px;color:#1e1e1e;font-family:'Liberation Sans',sans-serif;transform:scaleX(0.9356);transform-origin:0 0;">Зависимости</div>
<svg style="left:953px;top:190px;" width="6" height="10" viewBox="0 0 6 10"><path d="M0.5 0.5 L5.5 5 L0.5 9.5 Z" fill="none" stroke="#1e1e1e"/></svg>
<div class="t" style="left:973px;top:191px;font-size:10px;line-height:10px;color:#4a9a4a;font-family:'Liberation Sans',sans-serif;transform:scaleX(0.9500);transform-origin:0 0;font-weight:bold">C#</div>
<div class="t" style="left:991px;top:190px;font-size:12px;line-height:12px;color:#1e1e1e;font-family:'Liberation Sans',sans-serif;transform:scaleX(0.9112);transform-origin:0 0;">Program.cs</div>
<div class="a" style="left:926px;top:385px;width:131px;height:19px;background:#f5f7fb;"></div>
<div class="t" style="left:931px;top:388px;font-size:12px;line-height:12px;color:#1e1e1e;font-family:'Liberation Sans',sans-serif;transform:scaleX(0.9264);transform-origin:0 0;">Обозреватель решений</div>
<div class="a" style="left:1057px;top:385px;width:87px;height:18px;background:#4d6497;"></div>
<div class="t" style="left:1064px;top:388px;font-size:12px;line-height:12px;color:#e8ecf6;font-family:'Liberation Sans',sans-serif;transform:scaleX(0.9417);transform-origin:0 0;">Изменения Git</div>
<div class="a" style="left:926px;top:411px;width:324px;height:20px;background:#40568d;"></div>
<div class="t" style="left:930px;top:416px;font-size:12px;line-height:12px;color:#ffffff;font-family:'Liberation Sans',sans-serif;transform:scaleX(0.9090);transform-origin:0 0;">Свойства</div>
<svg style="left:1205px;top:418px;" width="8" height="4" viewBox="0 0 8 4"><path d="M0 0 H8 L4 4 Z" fill="#c9d1e8"/></svg>
<svg style="left:1221px;top:415px;" width="7" height="11" viewBox="0 0 7 11"><path d="M1.5 0.5 H5.5 V6 H1.5 Z M0 6.5 H7 M3.5 6.5 V10.5" fill="none" stroke="#c9d1e8" stroke-width="1.1"/></svg>
<svg style="left:1235px;top:415px;" width="9" height="9" viewBox="0 0 9 9"><path d="M0.5 0.5 L8.5 8.5 M8.5 0.5 L0.5 8.5" stroke="#c9d1e8" stroke-width="1.3"/></svg>
<div class="a" style="left:926px;top:431px;width:324px;height:23px;background:#f8f9fc;"></div>
<svg style="left:1241px;top:442px;" width="5" height="3" viewBox="0 0 5 3"><path d="M0 0 H5 L2.5 3 Z" fill="#1e1e1e"/></svg>
<div class="a" style="left:926px;top:454px;width:324px;height:24px;background:#ccd5f0;"></div>
<div class="a" style="left:928px;top:455px;width:22px;height:21px;background:#fff2c0;border:1px solid #cfc3a0"></div>
<svg style="left:931px;top:458px;" width="16" height="16" viewBox="0 0 16 16"><rect x="1" y="1" width="5" height="5" fill="#1e1e1e"/><path d="M2 3.5 H5 M3.5 2 V5" stroke="#fff"/><rect x="1" y="10" width="5" height="5" fill="#1e1e1e"/><path d="M2 12.5 H5" stroke="#fff"/><rect x="7" y="0.5" width="5" height="1.2" fill="#1e1e1e"/><rect x="7" y="3" width="7" height="1.2" fill="#1e1e1e"/><rect x="7" y="5.5" width="7" height="1.2" fill="#1e1e1e"/><rect x="7" y="8" width="7" height="1.2" fill="#1e1e1e"/><rect x="7" y="10.5" width="6" height="1.2" fill="#555"/><rect x="7" y="13" width="6" height="1.2" fill="#555"/></svg>
<svg style="left:953px;top:458px;" width="16" height="16" viewBox="0 0 16 16"><rect x="1" y="1" width="7" height="7.5" fill="#2a3550"/><text x="4.5" y="7.5" font-size="7" font-weight="bold" text-anchor="middle" fill="#e8ecf6" font-family="Liberation Sans">A</text><text x="4.5" y="15" font-size="7.5" font-weight="bold" text-anchor="middle" fill="#1e1e1e" font-family="Liberation Sans">Z</text><path d="M11 4 V12.5 M8.5 10 L11 13 L13.5 10" fill="none" stroke="#1a4f9c" stroke-width="2"/></svg>
<div class="a" style="left:975px;top:458px;width:1px;height:16px;background:#a9b2cc;"></div>
<svg style="left:981px;top:458px;" width="14" height="14" viewBox="0 0 14 14"><path d="M1.5 12.5 L7 7" stroke="#9aa0b0" stroke-width="3" stroke-linecap="round"/><circle cx="9" cy="5" r="4.3" fill="#9aa0b0"/><path d="M9.2 4.8 L10.5 -0.5 L15 4 Z" fill="#ccd5f0"/><circle cx="10" cy="4" r="1.3" fill="#ccd5f0"/></svg>
<div class="a" style="left:926px;top:478px;width:324px;height:177px;background:#f5f7fb;"></div>
<div class="a" style="left:926px;top:595px;width:324px;height:1px;background:#e3e5ec;"></div>
<div class="a" style="left:1274px;top:68px;width:6px;height:113px;background:#3f4f7d;"></div>
<div class="t" style="left:1252px;top:68px;width:20px;height:120px;"><div style="position:absolute;left:0;top:0;transform-origin:0 0;transform:translate(18px,0) rotate(90deg);font-size:11px;line-height:11px;color:#f0f0f0;white-space:pre">Средства диагностики</div></div>
<div class="a" style="left:30px;top:461px;width:888px;height:20px;background:#40568d;"></div>
<div class="t" style="left:34px;top:465px;font-size:12px;line-height:12px;color:#ffffff;font-family:'Liberation Sans',sans-serif;transform:scaleX(0.9778);transform-origin:0 0;">Список ошибок</div>
<svg style="left:873px;top:468px;" width="8" height="4" viewBox="0 0 8 4"><path d="M0 0 H8 L4 4 Z" fill="#c9d1e8"/></svg>
<svg style="left:889px;top:465px;" width="7" height="11" viewBox="0 0 7 11"><path d="M1.5 0.5 H5.5 V6 H1.5 Z M0 6.5 H7 M3.5 6.5 V10.5" fill="none" stroke="#c9d1e8" stroke-width="1.1"/></svg>
<svg style="left:903px;top:466px;" width="9" height="9" viewBox="0 0 9 9"><path d="M0.5 0.5 L8.5 8.5 M8.5 0.5 L0.5 8.5" stroke="#c9d1e8" stroke-width="1.3"/></svg>
<div class="a" style="left:30px;top:481px;width:888px;height:24px;background:#ccd5f0;"></div>
<div class="a" style="left:37px;top:483px;width:140px;height:20px;background:#f5f6fb;"></div>
<div class="t" style="left:40px;top:488px;font-size:12px;line-height:12px;color:#1e1e1e;font-family:'Liberation Sans',sans-serif;transform:scaleX(0.9288);transform-origin:0 0;">Все решение</div>
<svg style="left:167px;top:492px;" width="5" height="3" viewBox="0 0 5 3"><path d="M0 0 H5 L2.5 3 Z" fill="#1e1e1e"/></svg>
<div class="a" style="left:183px;top:485px;width:1px;height:16px;background:#a9b2cc;"></div>
<div class="a" style="left:188px;top:483px;width:80px;height:20px;background:#fbf0d2;border:1px solid #d2c9b0"></div>
<svg style="left:191px;top:486px;" width="14" height="14" viewBox="0 0 14 14"><circle cx="7" cy="7" r="6.8" fill="#d2201c"/><path d="M4.2 4.2 L9.8 9.8 M9.8 4.2 L4.2 9.8" stroke="#fbe9e9" stroke-width="2.2"/></svg>
<div class="t" style="left:209px;top:487px;font-size:12px;line-height:12px;color:#1e1e1e;font-family:'Liberation Sans',sans-serif;transform:scaleX(0.9491);transform-origin:0 0;">1 Ошибка</div>
<div class="a" style="left:273px;top:485px;width:1px;height:16px;background:#a9b2cc;"></div>
<div class="a" style="left:277px;top:483px;width:124px;height:20px;background:#fbf0d2;border:1px solid #d2c9b0"></div>
<svg style="left:281px;top:486px;" width="13" height="13" viewBox="0 0 13 13"><path d="M6.5 0 L13 13 H0 Z" fill="#f8c800"/><path d="M6.5 4 V9" stroke="#1e1e1e" stroke-width="1.6"/><rect x="5.7" y="10" width="1.6" height="1.6" fill="#1e1e1e"/></svg>
<div class="t" style="left:297px;top:487px;font-size:12px;line-height:12px;color:#1e1e1e;font-family:'Liberation Sans',sans-serif;transform:scaleX(0.9159);transform-origin:0 0;">1 Предупреждение</div>
<div class="a" style="left:406px;top:485px;width:1px;height:16px;background:#a9b2cc;"></div>
<svg style="left:413px;top:486px;" width="13" height="13" viewBox="0 0 13 13"><circle cx="6.5" cy="6.5" r="6.5" fill="#1ba1e2"/><rect x="5.6" y="5" width="1.8" height="5.5" fill="#fff"/><rect x="5.6" y="2.5" width="1.8" height="1.8" fill="#fff"/></svg>
<div class="t" style="left:431px;top:487px;font-size:12px;line-height:12px;color:#1e1e1e;font-family:'Liberation Sans',sans-serif;transform:scaleX(0.9408);transform-origin:0 0;">0 Сообщения</div>
<div class="a" style="left:512px;top:485px;width:1px;height:16px;background:#a9b2cc;"></div>
<div class="a" style="left:516px;top:483px;width:20px;height:20px;background:#fbf0d2;border:1px solid #d2c9b0"></div>
<svg style="left:519px;top:486px;" width="14" height="14" viewBox="0 0 14 14"><path d="M0.5 0.5 L5.5 5.5 M5.5 0.5 L0.5 5.5" stroke="#e51400" stroke-width="1.6"/><path d="M4 6 H14 L10 10 V14 L8 13 V10 Z" fill="#1e1e1e"/></svg>
<div class="a" style="left:540px;top:485px;width:1px;height:16px;background:#a9b2cc;"></div>
<div class="a" style="left:547px;top:483px;width:141px;height:20px;background:#f5f6fb;"></div>
<div class="t" style="left:551px;top:488px;font-size:12px;line-height:12px;color:#1e1e1e;font-family:'Liberation Sans',sans-serif;transform:scaleX(0.9114);transform-origin:0 0;">Сборка и IntelliSense</div>
<svg style="left:678px;top:492px;" width="5" height="3" viewBox="0 0 5 3"><path d="M0 0 H5 L2.5 3 Z" fill="#1e1e1e"/></svg>
<div class="a" style="left:732px;top:484px;width:186px;height:18px;background:#ffffff;"></div>
<div class="t" style="left:736px;top:487px;font-size:12px;line-height:12px;color:#6d6d6d;font-family:'Liberation Sans',sans-serif;transform:scaleX(0.9775);transform-origin:0 0;">Поиск по списку ошибок</div>
<svg style="left:894px;top:488px;" width="9" height="10" viewBox="0 0 9 10"><circle cx="5.5" cy="3.5" r="2.8" fill="none" stroke="#424242" stroke-width="1.4"/><path d="M3.7 5.5 L0.8 8.8" stroke="#424242" stroke-width="1.8"/></svg>
<svg style="left:908px;top:492px;" width="5" height="3" viewBox="0 0 5 3"><path d="M0 0 H5 L2.5 3 Z" fill="#1e1e1e"/></svg>
<div class="a" style="left:30px;top:505px;width:888px;height:19px;background:#f6f6f7;"></div>
<div class="a" style="left:30px;top:524px;width:888px;height:1px;background:#dcdce2;"></div>
<div class="a" style="left:55px;top:506px;width:1px;height:17px;background:#e0e0e6;"></div>
<div class="a" style="left:80px;top:506px;width:1px;height:17px;background:#e0e0e6;"></div>
<div class="a" style="left:127px;top:506px;width:1px;height:17px;background:#e0e0e6;"></div>
<div class="a" style="left:464px;top:506px;width:1px;height:17px;background:#e0e0e6;"></div>
<div class="a" style="left:605px;top:506px;width:1px;height:17px;background:#e0e0e6;"></div>
<div class="a" style="left:745px;top:506px;width:1px;height:17px;background:#e0e0e6;"></div>
<div class="a" style="left:778px;top:506px;width:1px;height:17px;background:#e0e0e6;"></div>
<div class="a" style="left:895px;top:506px;width:1px;height:17px;background:#e0e0e6;"></div>
<svg style="left:70px;top:508px;" width="5" height="5" viewBox="0 0 5 5"><path d="M0 0.5 H4.5 V5" fill="none" stroke="#424242"/></svg>
<div class="t" style="left:83px;top:509px;font-size:12px;line-height:12px;color:#1e1e1e;font-family:'Liberation Sans',sans-serif;transform:scaleX(0.9662);transform-origin:0 0;">Код</div>
<div class="t" style="left:131px;top:509px;font-size:12px;line-height:12px;color:#1e1e1e;font-family:'Liberation Sans',sans-serif;transform:scaleX(0.9222);transform-origin:0 0;">Описание</div>
<div class="t" style="left:468px;top:509px;font-size:12px;line-height:12px;color:#1e1e1e;font-family:'Liberation Sans',sans-serif;transform:scaleX(0.9473);transform-origin:0 0;">Проект</div>
<div class="t" style="left:608px;top:509px;font-size:12px;line-height:12px;color:#1e1e1e;font-family:'Liberation Sans',sans-serif;transform:scaleX(0.9468);transform-origin:0 0;">Файл</div>
<div class="t" style="left:748px;top:509px;font-size:12px;line-height:12px;color:#1e1e1e;font-family:'Liberation Sans',sans-serif;transform:scaleX(0.9614);transform-origin:0 0;">Ст...</div>
<div class="t" style="left:781px;top:509px;font-size:12px;line-height:12px;color:#1e1e1e;font-family:'Liberation Sans',sans-serif;transform:scaleX(0.9231);transform-origin:0 0;">Состояние подавл...</div>
<div class="a" style="left:30px;top:525px;width:888px;height:31px;background:#e8e9ef;"></div>
<div class="a" style="left:30px;top:556px;width:888px;height:31px;background:#f5f6fa;"></div>
<div class="a" style="left:30px;top:587px;width:888px;height:48px;background:#ffffff;"></div>
<svg style="left:61px;top:534px;" width="14" height="14" viewBox="0 0 14 14"><circle cx="7" cy="7" r="6.8" fill="#d2201c"/><path d="M4.2 4.2 L9.8 9.8 M9.8 4.2 L4.2 9.8" stroke="#fbe9e9" stroke-width="2.2"/></svg>
<div class="t" style="left:83px;top:536px;font-size:12px;line-height:12px;color:#215f9d;font-family:'Liberation Sans',sans-serif;transform:scaleX(0.8425);transform-origin:0 0;text-decoration:underline">CS5001</div>
<div class="t" style="left:131px;top:529px;font-size:12px;line-height:12px;color:#1e1e1e;font-family:'Liberation Sans',sans-serif;transform:scaleX(0.9438);transform-origin:0 0;">Программа не содержит статического метода "Main",</div>
<div class="t" style="left:131px;top:543px;font-size:12px;line-height:12px;color:#1e1e1e;font-family:'Liberation Sans',sans-serif;transform:scaleX(0.9254);transform-origin:0 0;">подходящего для точки входа.</div>
<div class="t" style="left:468px;top:536px;font-size:12px;line-height:12px;color:#1e1e1e;font-family:'Liberation Sans',sans-serif;transform:scaleX(0.9147);transform-origin:0 0;">ConsoleApp2</div>
<div class="t" style="left:608px;top:536px;font-size:12px;line-height:12px;color:#1e1e1e;font-family:'Liberation Sans',sans-serif;transform:scaleX(0.8318);transform-origin:0 0;">CSC</div>
<div class="t" style="left:750px;top:536px;font-size:12px;line-height:12px;color:#1e1e1e;font-family:'Liberation Sans',sans-serif;transform:scaleX(0.6330);transform-origin:0 0;">1</div>
<div class="t" style="left:781px;top:536px;font-size:12px;line-height:12px;color:#1e1e1e;font-family:'Liberation Sans',sans-serif;transform:scaleX(0.9510);transform-origin:0 0;">Активные</div>
<svg style="left:61px;top:566px;" width="13" height="13" viewBox="0 0 13 13"><path d="M6.5 0 L13 13 H0 Z" fill="#f8c800"/><path d="M6.5 4 V9" stroke="#1e1e1e" stroke-width="1.6"/><rect x="5.7" y="10" width="1.6" height="1.6" fill="#1e1e1e"/></svg>
<div class="t" style="left:83px;top:567px;font-size:12px;line-height:12px;color:#2c7ba3;font-family:'Liberation Sans',sans-serif;transform:scaleX(0.8543);transform-origin:0 0;">CS0028</div>
<div class="t" style="left:131px;top:560px;font-size:12px;line-height:12px;color:#1e1e1e;font-family:'Liberation Sans',sans-serif;transform:scaleX(0.9452);transform-origin:0 0;">"Program.Main(string[])" имеет неправильную сигнатуру и не</div>
<div class="t" style="left:131px;top:574px;font-size:12px;line-height:12px;color:#1e1e1e;font-family:'Liberation Sans',sans-serif;transform:scaleX(0.9360);transform-origin:0 0;">может быть точкой входа</div>
<div class="t" style="left:468px;top:567px;font-size:12px;line-height:12px;color:#1e1e1e;font-family:'Liberation Sans',sans-serif;transform:scaleX(0.9147);transform-origin:0 0;">ConsoleApp2</div>
<div class="t" style="left:608px;top:567px;font-size:12px;line-height:12px;color:#1e1e1e;font-family:'Liberation Sans',sans-serif;transform:scaleX(0.9261);transform-origin:0 0;">Program.cs</div>
<div class="t" style="left:750px;top:567px;font-size:12px;line-height:12px;color:#1e1e1e;font-family:'Liberation Sans',sans-serif;transform:scaleX(0.7033);transform-origin:0 0;">7</div>
<div class="t" style="left:781px;top:567px;font-size:12px;line-height:12px;color:#1e1e1e;font-family:'Liberation Sans',sans-serif;transform:scaleX(0.9510);transform-origin:0 0;">Активные</div>
<div class="a" style="left:30px;top:635px;width:93px;height:19px;background:#ffffff;"></div>
<div class="t" style="left:35px;top:639px;font-size:12px;line-height:12px;color:#1e1e1e;font-family:'Liberation Sans',sans-serif;transform:scaleX(0.9826);transform-origin:0 0;">Список ошибок</div>
<div class="a" style="left:123px;top:635px;width:44px;height:18px;background:#4d6497;"></div>
<div class="t" style="left:129px;top:639px;font-size:12px;line-height:12px;color:#e8ecf6;font-family:'Liberation Sans',sans-serif;transform:scaleX(0.9410);transform-origin:0 0;">Вывод</div>
<div class="a" style="left:0px;top:661px;width:1280px;height:21px;background:#40508d;"></div>
<svg style="left:5px;top:666px;" width="14" height="11" viewBox="0 0 14 11"><path d="M3.5 0.8 H13 L10.5 10.2 H1 Z" fill="none" stroke="#e8ecf6" stroke-width="1.3"/></svg>
<div class="t" style="left:26px;top:666px;font-size:12px;line-height:12px;color:#ffffff;font-family:'Liberation Sans',sans-serif;transform:scaleX(0.9789);transform-origin:0 0;">Готово</div>
<svg style="left:974px;top:666px;" width="9" height="11" viewBox="0 0 9 11"><path d="M4.5 11 V1.5 M0.8 5 L4.5 1 L8.2 5" fill="none" stroke="#ffffff" stroke-width="1.6"/></svg>
<div class="t" style="left:992px;top:666px;font-size:12px;line-height:12px;color:#ffffff;font-family:'Liberation Sans',sans-serif;transform:scaleX(0.9277);transform-origin:0 0;">Добавить в систему управления версиями</div>
<svg style="left:1217px;top:669px;" width="8" height="5" viewBox="0 0 8 5"><path d="M0 5 L4 0 L8 5 Z" fill="#ffffff"/></svg>
<svg style="left:1243px;top:663px;" width="22" height="19" viewBox="0 0 22 19"><path d="M6.5 1 C3.5 1 2.5 4 2.5 7.5 L1 11 H12 L10.5 7.5 C10.5 4 9.5 1 6.5 1 Z" fill="#e2e6f0"/><circle cx="6.5" cy="12.5" r="1.6" fill="#e2e6f0"/><circle cx="14.5" cy="12.5" r="6" fill="#d71a1a"/><text x="14.5" y="16" font-size="9" font-weight="bold" text-anchor="middle" fill="#fff" font-family="Liberation Sans">1</text></svg>
<div class="a" style="left:0px;top:682px;width:1280px;height:38px;background:#1f2a31;"></div>
<svg style="left:15px;top:693px;" width="16" height="17" viewBox="0 0 16 17"><path d="M0 2 L5.4 1.2 V7.3 H0 Z M6.4 1.05 L15.6 0 V7.3 H6.4 Z M0 8.3 H5.4 V14.6 L0 13.8 Z M6.4 8.3 H15.6 V16 L6.4 14.8 Z" fill="#ffffff"/></svg>
<div class="a" style="left:45px;top:682px;width:322px;height:38px;background:#f2f2f2;"></div>
<svg style="left:56px;top:692px;" width="16" height="17" viewBox="0 0 16 17"><circle cx="10.3" cy="6.4" r="4.5" fill="none" stroke="#333" stroke-width="1.3"/><path d="M7 9.7 L0.8 15.9" stroke="#333" stroke-width="1.4"/></svg>
<div class="t" style="left:82px;top:696px;font-size:14px;line-height:14px;color:#3a3a3a;font-family:'Liberation Sans',sans-serif;transform:scaleX(0.9802);transform-origin:0 0;">Введите здесь текст для поиска</div>
<svg style="left:381px;top:693px;" width="17" height="16" viewBox="0 0 17 16"><path d="M1.5 4 V1.5 H11.5 V4 M1.5 12 V14.5 H11.5 V12" fill="none" stroke="#e8eaec" stroke-width="1.3"/><rect x="1.5" y="5" width="10" height="6" fill="none" stroke="#e8eaec" stroke-width="1.3"/><rect x="14" y="0" width="2" height="15" fill="#c9cdd0"/><rect x="13.5" y="4" width="3" height="2.5" fill="#ffffff"/></svg>
<svg style="left:427px;top:691px;" width="21" height="19" viewBox="0 0 21 19"><path d="M0 1 H7 L9 3 H21 V18 H0 Z" fill="#e8b13a"/><rect x="0" y="5" width="21" height="13" fill="#ffd766"/><path d="M5 18 V12 H16 V18 H13 V15 H8 V18 Z" fill="#4f9bd9"/></svg>
<div class="a" style="left:419px;top:718px;width:37px;height:2px;background:#76b9ed;"></div>
<svg style="left:472px;top:690px;" width="23" height="23" viewBox="0 0 23 23"><path d="M7 7 V1 H16 V7" fill="none" stroke="#f0f0f0" stroke-width="1.8"/><rect x="0" y="7" width="23" height="15" fill="#f2f2f2"/><rect x="7.5" y="9.5" width="3.5" height="3.5" fill="#e8542b"/><rect x="12" y="9.5" width="3.5" height="3.5" fill="#80b827"/><rect x="7.5" y="14" width="3.5" height="3.5" fill="#1ba1e2"/><rect x="12" y="14" width="3.5" height="3.5" fill="#f5b81c"/></svg>
<div class="a" style="left:507px;top:682px;width:45px;height:38px;background:#3a4248;"></div>
<svg style="left:518px;top:690px;" width="22" height="22" viewBox="0 0 22 22"><circle cx="11" cy="11" r="11" fill="#db4437"/><path d="M11 11 L1.5 5.5 A11 11 0 0 0 9 21.8 Z" fill="#0f9d58"/><path d="M11 11 L9 21.8 A11 11 0 0 0 20.5 5.5 Z" fill="#ffcd40"/><path d="M11 11 L20.5 5.5 A11 11 0 0 0 1.5 5.5 Z" fill="#db4437"/><circle cx="11" cy="11" r="5" fill="#ffffff"/><circle cx="11" cy="11" r="3.8" fill="#4285f4"/></svg>
<svg style="left:564px;top:690px;" width="23" height="22" viewBox="0 0 23 22"><circle cx="11.5" cy="11" r="11" fill="#f0eeee"/><path d="M6.5 4.5 L11.5 11.5 L16.5 4.5 M11.5 11.5 V18.5" fill="none" stroke="#dd1f26" stroke-width="2.6"/></svg>
<div class="a" style="left:598px;top:682px;width:46px;height:38px;background:#4a5258;"></div>
<svg style="left:600px;top:684px;" width="44" height="34" viewBox="0 0 44 34"><path d="M9.5 13 L13 11 L27 22 V28 Z" fill="#7446cc"/><path d="M9.5 13 L13 11 V22 L9.5 20.5 Z" fill="#5a2d9e"/><path d="M23 5.5 L27 5 V16.5 L19.5 19.5 L17 17.5 Z" fill="#6a3bbd"/><path d="M26.5 5.5 L32.5 8.5 V25 L26.5 28 Z" fill="#b48ce8"/></svg>
<div class="a" style="left:598px;top:718px;width:46px;height:2px;background:#76b9ed;"></div>
<svg style="left:1028px;top:697px;" width="12" height="7" viewBox="0 0 12 7"><path d="M0.8 6.5 L6 1.2 L11.2 6.5" fill="none" stroke="#ffffff" stroke-width="1.4"/></svg>
<svg style="left:1048px;top:695px;" width="17" height="11" viewBox="0 0 17 11"><circle cx="2.5" cy="2.5" r="2" fill="none" stroke="#fff" stroke-width="1.2"/><path d="M2.5 4.5 V10.5" stroke="#fff" stroke-width="1.2"/><path d="M5 2.5 H14.5 V10 H5" fill="none" stroke="#c9cdd0"/><rect x="15" y="4.5" width="1.5" height="3.5" fill="#c9cdd0"/><path d="M7 4.5 L11 8.5 M11 4.5 L7 8.5" stroke="#fff" stroke-width="1.2"/></svg>
<svg style="left:1071px;top:693px;" width="16" height="16" viewBox="0 0 16 16"><circle cx="7.5" cy="7.5" r="6.8" fill="none" stroke="#fff" stroke-width="1.1"/><ellipse cx="7.5" cy="7.5" rx="3" ry="6.8" fill="none" stroke="#fff" stroke-width="1"/><path d="M0.7 7.5 H14.3 M1.8 4 H13.2 M1.8 11 H13.2" stroke="#fff"/><circle cx="12.5" cy="12.5" r="3" fill="#1f2a31" stroke="#fff"/></svg>
<svg style="left:1093px;top:693px;" width="16" height="16" viewBox="0 0 16 16"><circle cx="8" cy="8" r="7.5" fill="#e8d437"/><path d="M1.5 10 A7 7 0 0 0 14.5 10 A6 4 0 0 1 1.5 10 Z" fill="#3a9a36"/><path d="M8 4.5 V11.5 M4.5 8 H11.5" stroke="#2e8a2a" stroke-width="2.2"/></svg>
<svg style="left:1116px;top:694px;" width="16" height="14" viewBox="0 0 16 14"><path d="M0.5 4.5 H3.5 L7.5 0.8 V13.2 L3.5 9.5 H0.5 Z" fill="none" stroke="#fff"/><path d="M10 4 C11 6 11 8 10 10 M12.5 2 C14.5 5 14.5 9 12.5 12" fill="none" stroke="#a9b0b5"/></svg>
<div class="t" style="left:1141px;top:695px;font-size:12px;line-height:12px;color:#ffffff;font-family:'Liberation Sans',sans-serif;transform:scaleX(0.8155);transform-origin:0 0;">ENG</div>
<div class="t" style="left:1186px;top:686px;font-size:12px;line-height:12px;color:#ffffff;font-family:'Liberation Sans',sans-serif;transform:scaleX(0.8671);transform-origin:0 0;">21:11</div>
<div class="t" style="left:1175px;top:703px;font-size:12px;line-height:12px;color:#ffffff;font-family:'Liberation Sans',sans-serif;transform:scaleX(0.8178);transform-origin:0 0;">13.02.2021</div>
<svg style="left:1241px;top:693px;" width="24" height="23" viewBox="0 0 24 23"><path d="M0.5 0.5 H17.5 V12.5 H7 L3 16 V12.5 H0.5 Z" fill="#ffffff"/><path d="M3 3.5 H15 M3 6.5 H15 M3 9.5 H12" stroke="#1f2a31" stroke-width="1.2"/><circle cx="16" cy="15" r="7" fill="#2a2f33" stroke="#9ea3a6" stroke-width="1.3"/><text x="16" y="18.8" font-size="10" font-weight="bold" text-anchor="middle" fill="#fff" font-family="Liberation Sans">1</text></svg>
<div class="a" style="left:1275px;top:682px;width:1px;height:38px;background:#5a6268;"></div>
</body></html>
